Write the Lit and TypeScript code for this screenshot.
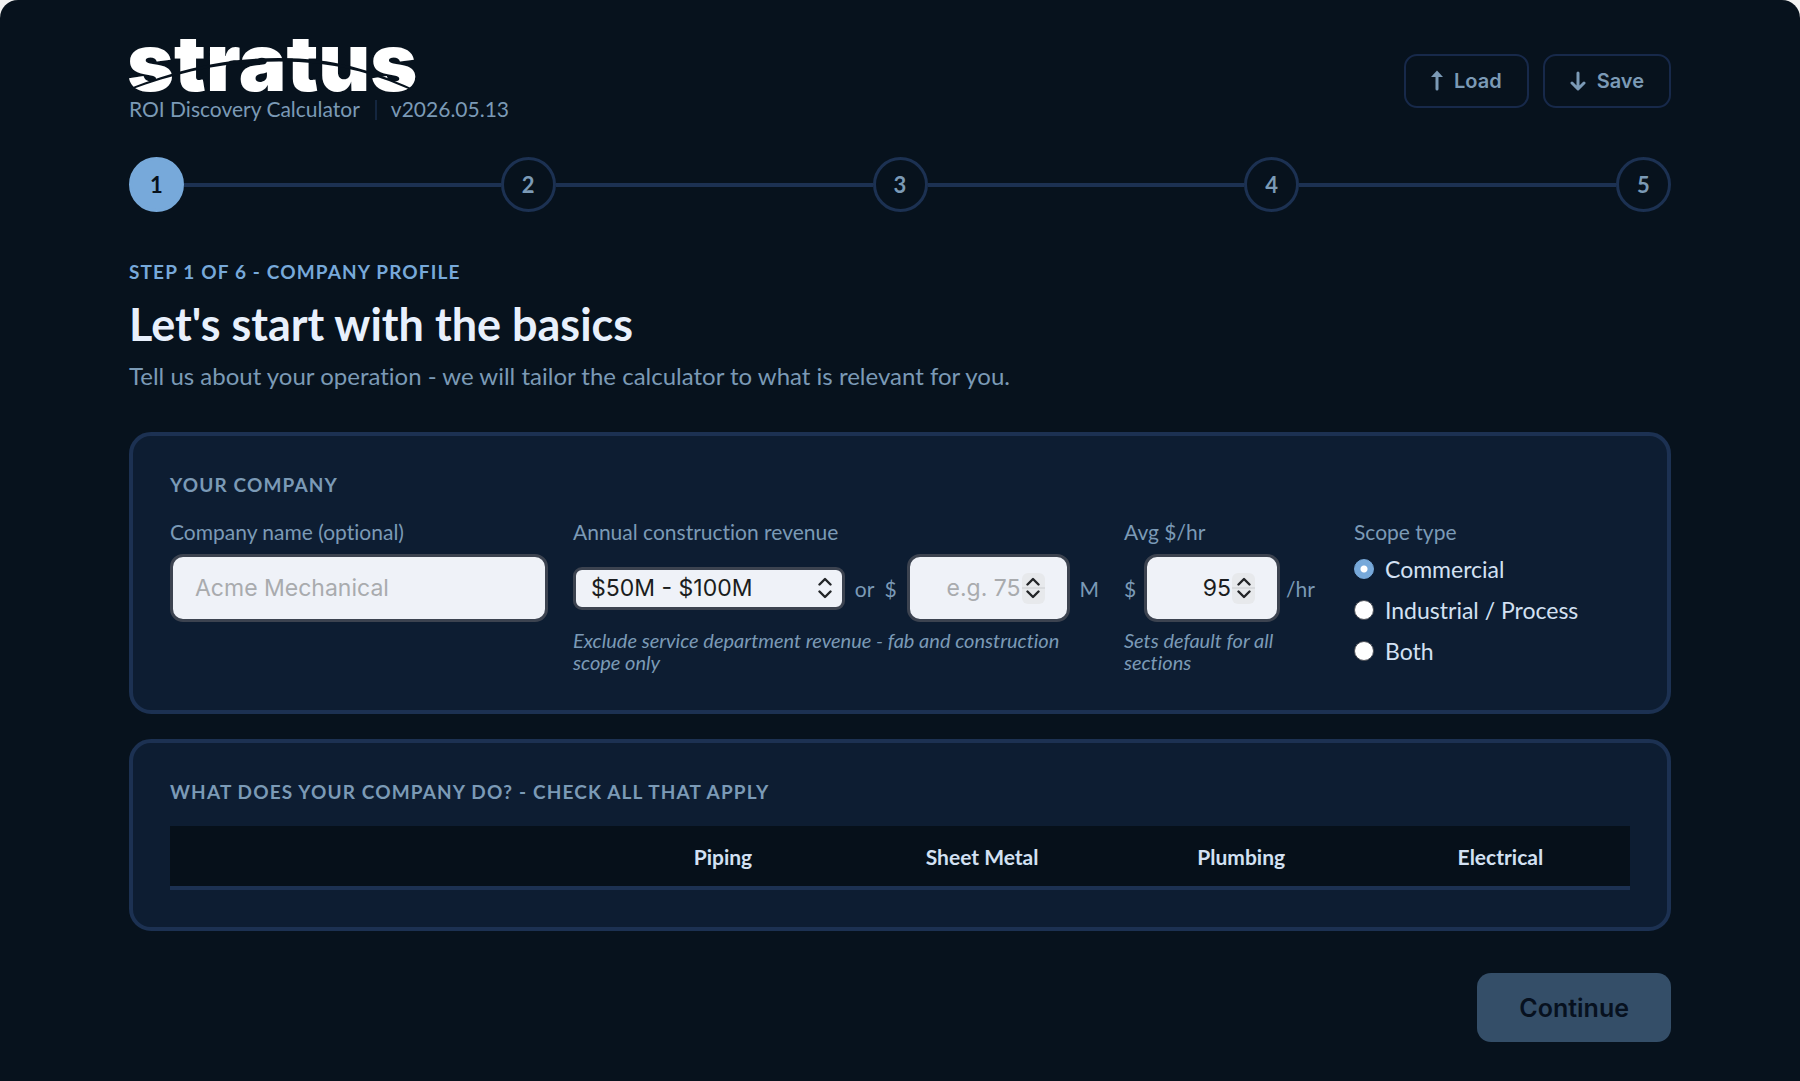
import { LitElement, html, css, svg } from "lit";
import { customElement, state } from "lit/decorators.js";

const STEPS = [1, 2, 3, 4, 5];
const TRADES = ["Piping", "Sheet Metal", "Plumbing", "Electrical"];
const SCOPES = ["Commercial", "Industrial / Process", "Both"];
const REVENUE = ["Under $50M", "$50M - $100M", "$100M - $250M", "Over $250M"];

@customElement("app-root")
export class AppRoot extends LitElement {
  @state() private scope = "Commercial";

  static styles = css`
    :host {
      display: block;
      background: #f2f2f2;
      --bg: #07121d;
      --card: #0d1d32;
      --line: #1c3152;
      --muted: #7b9ab6;
      --accent: #77a9da;
      --text: #d3e1f3;
      --ui: Inter, "Liberation Sans", sans-serif;
      font-family: Lato, "Open Sans", sans-serif;
      font-variant-ligatures: none;
      color: var(--muted);
    }
    * {
      box-sizing: border-box;
    }
    h1,
    h2,
    p {
      margin: 0;
    }
    .page {
      min-height: 100vh;
      background: var(--bg);
      border-radius: 18px 18px 0 0;
      padding: 39px 24px 36px;
    }
    .wrap {
      max-width: 1542px;
      margin: 0 auto;
    }
    .header {
      display: flex;
      align-items: center;
      justify-content: space-between;
    }
    .logo {
      display: block;
      width: 288px;
      height: 56px;
      overflow: visible;
    }
    .logo-text {
      font: 900 80px Inter, sans-serif;
      fill: #fff;
    }
    .logo-cut {
      fill: var(--bg);
    }
    .meta {
      display: flex;
      align-items: center;
      font-size: 21px;
      line-height: 28px;
    }
    .version {
      margin-left: 15px;
      padding-left: 16px;
      position: relative;
    }
    .version::before {
      content: "";
      position: absolute;
      left: 0;
      top: 5px;
      width: 2px;
      height: 20px;
      background: #14263f;
    }
    .actions {
      display: flex;
      gap: 14px;
    }
    .ghost {
      display: flex;
      align-items: center;
      gap: 11px;
      height: 54px;
      padding: 0 25px;
      border: 2px solid #17294a;
      border-radius: 13px;
      background: transparent;
      color: var(--muted);
      font: 600 20px var(--ui);
    }
    .ghost svg {
      display: block;
      fill: none;
      stroke: currentColor;
      stroke-width: 3;
      stroke-linecap: round;
      stroke-linejoin: round;
    }
    .ghost .head {
      fill: currentColor;
      stroke: none;
    }
    .steps {
      display: flex;
      align-items: center;
      list-style: none;
      margin: 34px 0 48px;
      padding: 0;
    }
    .step {
      display: flex;
      align-items: center;
      flex: 1;
    }
    .step:first-child {
      flex: none;
    }
    .step:not(:first-child)::before {
      content: "";
      flex: 1;
      height: 4px;
      background: var(--line);
    }
    .dot {
      width: 55px;
      height: 55px;
      border: 3px solid var(--line);
      border-radius: 50%;
      display: grid;
      place-items: center;
      font-size: 22px;
      font-weight: 700;
    }
    .dot.on {
      background: var(--accent);
      border-color: var(--accent);
      color: var(--bg);
    }
    .eyebrow,
    .card-title {
      font-size: 19px;
      line-height: 24px;
      font-weight: 700;
      letter-spacing: 0.06em;
    }
    .eyebrow {
      color: var(--accent);
    }
    .title {
      margin-top: 13px;
      color: #e8f0fc;
      font-size: 45px;
      line-height: 54px;
      font-weight: 700;
    }
    .lead {
      margin: 10px 0 41px;
      font-size: 24px;
      line-height: 30px;
    }
    .card {
      background: var(--card);
      border: 4px solid var(--line);
      border-radius: 22px;
      padding: 37px;
      margin-bottom: 25px;
    }
    .card-title {
      margin-bottom: 22px;
    }
    .fields {
      display: grid;
      grid-template-columns: 378fr 526fr 205fr 276fr;
      gap: 25px;
    }
    .field {
      min-width: 0;
    }
    .label {
      display: block;
      margin-bottom: 9px;
      font-size: 21px;
      line-height: 26px;
      white-space: nowrap;
    }
    .row {
      display: grid;
      align-items: center;
      font-size: 21px;
    }
    .revenue-row {
      grid-template-columns: minmax(0, 272fr) auto auto minmax(0, 163fr) auto;
    }
    .rate-row {
      grid-template-columns: 20px minmax(0, 1fr) 49px;
    }
    .box {
      display: flex;
      align-items: center;
      min-width: 0;
      height: 68px;
      padding: 0 22px;
      border: 3px solid #3c4350;
      border-radius: 13px;
      background: #eff2f8;
      color: #1b1d20;
    }
    .control {
      width: 100%;
      min-width: 0;
      padding: 0;
      border: 0;
      outline: 0;
      background: transparent;
      color: inherit;
      font: 400 23px var(--ui);
      appearance: none;
      -moz-appearance: textfield;
    }
    .control::placeholder {
      color: #a9abae;
      opacity: 1;
    }
    .control::-webkit-inner-spin-button {
      appearance: none;
      margin: 0;
    }
    .number .control {
      text-align: right;
    }
    .select {
      height: 43px;
      padding: 0 10px 0 15px;
      border-radius: 9px;
    }
    .chevrons {
      display: block;
      flex: none;
      fill: none;
      stroke: #232528;
      stroke-width: 2.4;
      stroke-linecap: round;
      stroke-linejoin: round;
    }
    .spin {
      flex: none;
      width: 23px;
      height: 31px;
      margin-left: 1px;
      border-radius: 6px;
      background: linear-gradient(#e7e9ec 14px, #d9dbde 14px, #d9dbde 16px, #e7e9ec 16px);
      display: grid;
      place-items: center;
    }
    .or {
      padding: 0 10px;
    }
    .pre {
      padding-right: 10px;
    }
    .unit {
      padding-left: 10px;
    }
    .rate-unit {
      padding-left: 6px;
    }
    .hint {
      margin-top: 7px;
      font-size: 20px;
      line-height: 22px;
      font-style: italic;
    }
    .scopes {
      border: 0;
      margin: 0;
      padding: 0;
    }
    .legend {
      padding: 0;
    }
    .options {
      display: flex;
      flex-direction: column;
      gap: 13px;
      padding-top: 1px;
    }
    .option {
      display: flex;
      align-items: center;
      gap: 11px;
      color: var(--text);
      font-size: 23px;
      line-height: 28px;
    }
    .radio {
      appearance: none;
      flex: none;
      width: 20px;
      height: 20px;
      margin: 0;
      border: 1px solid #4b4e55;
      border-radius: 50%;
      background: #fff;
    }
    .radio:checked {
      border-color: var(--accent);
      background: radial-gradient(circle, #fff 3px, var(--accent) 4px);
    }
    .trades {
      width: 100%;
      border-collapse: separate;
      border-spacing: 0;
      table-layout: fixed;
      background: #06101a;
    }
    .trades td,
    .trades th {
      height: 64px;
      padding: 0;
      border-bottom: 4px solid var(--line);
      color: var(--text);
      font-size: 21px;
      font-weight: 700;
      text-align: center;
    }
    .trades .corner {
      width: 29%;
    }
    .footer {
      display: flex;
      justify-content: flex-end;
      margin-top: 42px;
    }
    .continue {
      height: 69px;
      padding: 0 42px;
      border: 0;
      border-radius: 14px;
      background: #344e68;
      color: #07111f;
      font: 600 25px var(--ui);
    }
  `;

  private chevrons() {
    return html`<svg class="chevrons" width="14" height="24" viewBox="0 0 14 24" aria-hidden="true">
      ${svg`<path d="M1.500 8.500 7 3 12.500 8.500M1.500 15.500 7 21 12.500 15.500"/>`}
    </svg>`;
  }

  render() {
    return html`
      <div class="page">
        <main class="wrap">
          <header class="header">
            <div>
              <svg class="logo" viewBox="0 0 288 56" role="img" aria-label="stratus">
                <text class="logo-text" x="-2" y="52">stratus</text>
                <path class="logo-cut" d="M-4-10H292V0H-4Z" />
                <path
                  class="logo-cut"
                  d="M0 49.500C50 30 95 19 150 19C205 19 243 31 283 49.500L282 51C243 34 205 22.500 150 22.500C95 22.500 50 33 1 51Z"
                />
              </svg>
              <div class="meta">
                <span>ROI Discovery Calculator</span>
                <span class="version">v2026.05.13</span>
              </div>
            </div>
            <div class="actions">
              <button class="ghost" type="button">
                <svg width="12" height="22" viewBox="0 0 12 22" aria-hidden="true">
                  <path d="M6 19V6" />
                  <path class="head" d="M6 0.500 12 7H0Z" />
                </svg>
                Load
              </button>
              <button class="ghost" type="button">
                <svg width="16" height="22" viewBox="0 0 16 22" aria-hidden="true">
                  <path d="M8 3v15.500M2 13l6 6 6-6" />
                </svg>
                Save
              </button>
            </div>
          </header>

          <ol class="steps">
            ${STEPS.map(
              (n) => html`<li class="step"><span class="dot ${n === 1 ? "on" : ""}">${n}</span></li>`
            )}
          </ol>

          <p class="eyebrow">STEP 1 OF 6 - COMPANY PROFILE</p>
          <h1 class="title">Let's start with the basics</h1>
          <p class="lead">Tell us about your operation - we will tailor the calculator to what is relevant for you.</p>

          <section class="card">
            <h2 class="card-title">YOUR COMPANY</h2>
            <div class="fields">
              <div class="field">
                <label class="label" for="company">Company name (optional)</label>
                <div class="box"><input class="control" id="company" type="text" placeholder="Acme Mechanical" /></div>
              </div>
              <div class="field">
                <label class="label" for="revenue">Annual construction revenue</label>
                <div class="row revenue-row">
                  <div class="box select">
                    <select class="control" id="revenue">
                      ${REVENUE.map((r) => html`<option ?selected=${r === "$50M - $100M"}>${r}</option>`)}
                    </select>
                    ${this.chevrons()}
                  </div>
                  <span class="or">or</span>
                  <label class="pre" for="exact">$</label>
                  <div class="box number">
                    <input class="control" id="exact" type="number" placeholder="e.g. 75" />
                    <span class="spin">${this.chevrons()}</span>
                  </div>
                  <span class="unit">M</span>
                </div>
                <p class="hint">Exclude service department revenue - fab and construction scope only</p>
              </div>
              <div class="field">
                <label class="label" for="rate">Avg $/hr</label>
                <div class="row rate-row">
                  <span>$</span>
                  <div class="box number">
                    <input class="control" id="rate" type="number" value="95" />
                    <span class="spin">${this.chevrons()}</span>
                  </div>
                  <span class="rate-unit">/hr</span>
                </div>
                <p class="hint">Sets default for all sections</p>
              </div>
              <fieldset class="field scopes">
                <legend class="label legend">Scope type</legend>
                <div class="options">
                  ${SCOPES.map(
                    (s) => html`<label class="option">
                      <input
                        class="radio"
                        type="radio"
                        name="scope"
                        .checked=${this.scope === s}
                        @change=${() => (this.scope = s)}
                      />${s}</label
                    >`
                  )}
                </div>
              </fieldset>
            </div>
          </section>

          <section class="card">
            <h2 class="card-title">WHAT DOES YOUR COMPANY DO? - CHECK ALL THAT APPLY</h2>
            <table class="trades">
              <thead>
                <tr>
                  <td class="corner"></td>
                  ${TRADES.map((t) => html`<th scope="col">${t}</th>`)}
                </tr>
              </thead>
            </table>
          </section>

          <div class="footer">
            <button class="continue" type="button">Continue</button>
          </div>
        </main>
      </div>
    `;
  }
}
